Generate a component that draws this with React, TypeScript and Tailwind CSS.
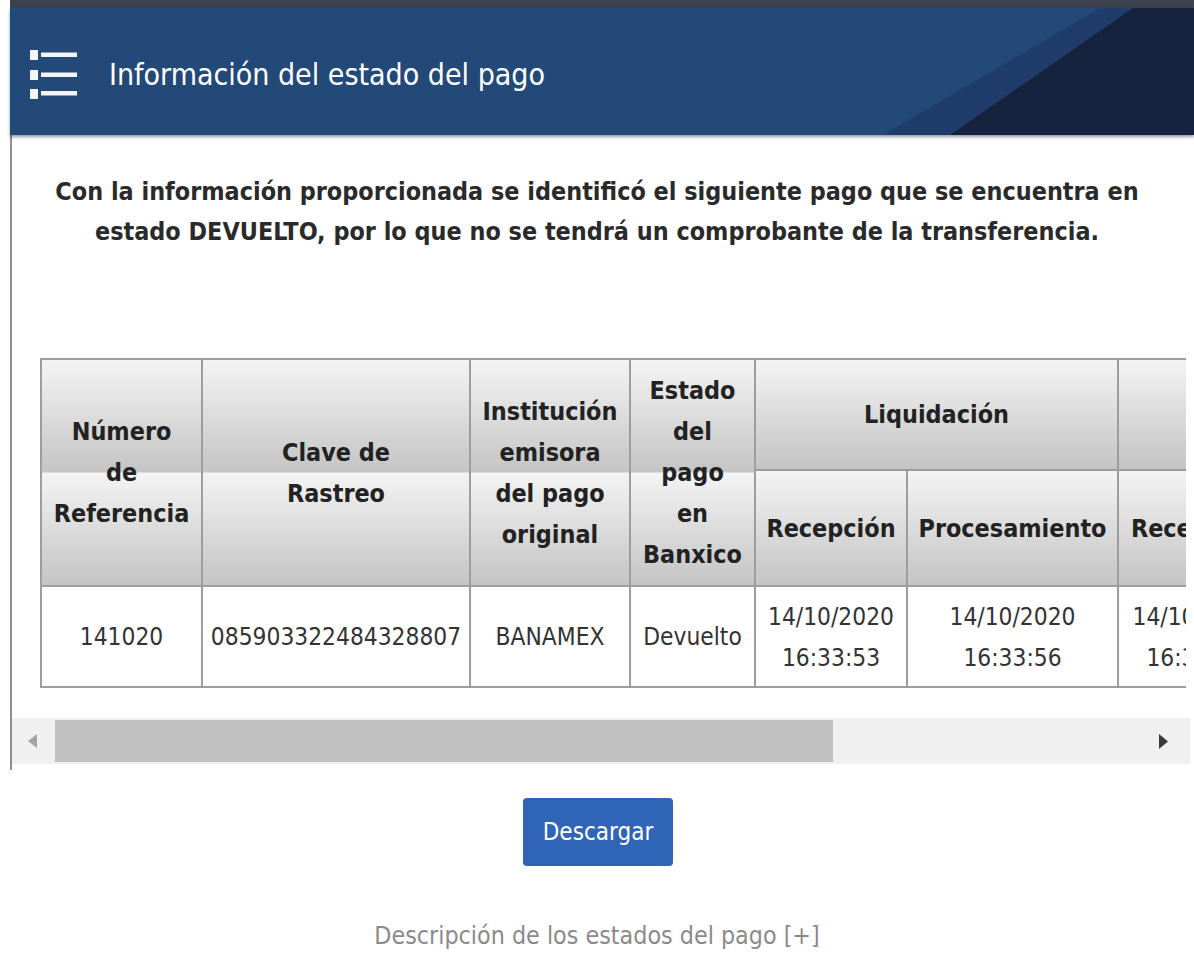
import React from "react";

function ListIcon() {
  return (
    <svg width="48" height="50" viewBox="0 0 48 50" className="shrink-0">
      <g fill="#f3f5f9">
        <rect x="0" y="0" width="8" height="10" />
        <rect x="0" y="20" width="8" height="10" />
        <rect x="0" y="39" width="8" height="10" />
        <rect x="11" y="2.5" width="36" height="4.5" />
        <rect x="11" y="22.5" width="36" height="4.5" />
        <rect x="11" y="41" width="36" height="4.5" />
      </g>
    </svg>
  );
}

const thBase =
  "border-2 border-[#9d9d9d] bg-linear-to-b from-[#f4f4f4] to-[#c4c4c4] text-center align-middle font-bold text-[#222] text-[24.9px] leading-[41px] p-0";
const thSpan = thBase + " bg-size-[100%_50%] bg-repeat";
const td =
  "border-2 border-[#9d9d9d] bg-white text-center align-middle font-normal text-[#333] text-[24.3px] leading-[41px] p-0";

export default function App() {
  return (
    <div className="relative h-[960px] w-[1194px] overflow-hidden bg-white font-['DejaVu_Sans_Condensed','DejaVu_Sans',sans-serif]">
      <div className="ml-[10px]">
        <div className="h-[8px] bg-[#3c424e]" />
        <header className="relative z-10 flex h-[127px] items-center overflow-hidden bg-[#234979] pl-[20px] pt-[6px] shadow-[0_2px_3px_rgba(20,30,50,0.45)]">
          <svg className="absolute inset-0" width="1184" height="127" viewBox="0 0 1184 127">
            <polygon points="873,127 1090,0 1123,0 940,127" fill="#1f3c6b" />
            <polygon points="940,127 1123,0 1184,0 1184,127" fill="#15233f" />
          </svg>
          <div className="relative">
            <ListIcon />
          </div>
          <h1 className="relative ml-[31px] text-[30px] font-normal leading-none text-white">
            Información del estado del pago
          </h1>
        </header>

        <div className="h-[635px] border-l-2 border-[#8f8f8f]">
          <p className="mr-[12px] pt-[37px] text-center text-[24.9px] font-bold leading-[40px] text-[#2a2a2a]">
            Con la información proporcionada se identificó el siguiente pago que se encuentra en
            <br />
            estado DEVUELTO, por lo que no se tendrá un comprobante de la transferencia.
          </p>

          <div className="ml-[28px] mr-[8px] mt-[106px] overflow-hidden">
            <table className="w-[1232px] table-fixed border-collapse">
              <colgroup>
                <col className="w-[161px]" />
                <col className="w-[268px]" />
                <col className="w-[160px]" />
                <col className="w-[125px]" />
                <col className="w-[152px]" />
                <col className="w-[211px]" />
                <col className="w-[155px]" />
              </colgroup>
              <thead>
                <tr className="h-[111px]">
                  <th rowSpan={2} className={thSpan}>
                    Número
                    <br />
                    de
                    <br />
                    Referencia
                  </th>
                  <th rowSpan={2} className={thSpan}>
                    Clave de
                    <br />
                    Rastreo
                  </th>
                  <th rowSpan={2} className={thSpan}>
                    Institución
                    <br />
                    emisora
                    <br />
                    del pago
                    <br />
                    original
                  </th>
                  <th rowSpan={2} className={thSpan}>
                    Estado
                    <br />
                    del
                    <br />
                    pago
                    <br />
                    en
                    <br />
                    Banxico
                  </th>
                  <th colSpan={2} className={thBase}>
                    Liquidación
                  </th>
                  <th className={thBase} />
                </tr>
                <tr className="h-[116px]">
                  <th className={thBase}>Recepción</th>
                  <th className={thBase}>Procesamiento</th>
                  <th className={thBase}>Recepción</th>
                </tr>
              </thead>
              <tbody>
                <tr className="h-[101px]">
                  <td className={td}>141020</td>
                  <td className={td}>085903322484328807</td>
                  <td className={td}>BANAMEX</td>
                  <td className={td}>Devuelto</td>
                  <td className={td}>
                    14/10/2020
                    <br />
                    16:33:53
                  </td>
                  <td className={td}>
                    14/10/2020
                    <br />
                    16:33:56
                  </td>
                  <td className={td}>
                    14/10/2020
                    <br />
                    16:33:58
                  </td>
                </tr>
              </tbody>
            </table>
          </div>

          <div className="mr-[4px] mt-[30px] flex h-[46px] items-stretch bg-[#f0f0f0]">
            <div className="flex w-[41px] items-center justify-center">
              <svg width="9" height="14" viewBox="0 0 9 14">
                <polygon points="9,0 0,7 9,14" fill="#a3a3a3" />
              </svg>
            </div>
            <div className="my-[2px] ml-[2px] w-[778px] bg-[#c1c1c1]" />
            <div className="flex flex-1 items-center justify-end pr-[22px]">
              <svg width="9" height="15" viewBox="0 0 9 15">
                <polygon points="0,0 9,7.5 0,15" fill="#3a3a3a" />
              </svg>
            </div>
          </div>
        </div>
      </div>

      <div className="mt-[28px] flex justify-center pl-[2px]">
        <button className="h-[68px] w-[150px] rounded-[4px] bg-[#2f64b6] text-[24px] text-white">
          Descargar
        </button>
      </div>

      <p className="mt-[54px] text-center text-[24.8px] leading-[32px] text-[#8a8a8a]">
        Descripción de los estados del pago [+]
      </p>
    </div>
  );
}
